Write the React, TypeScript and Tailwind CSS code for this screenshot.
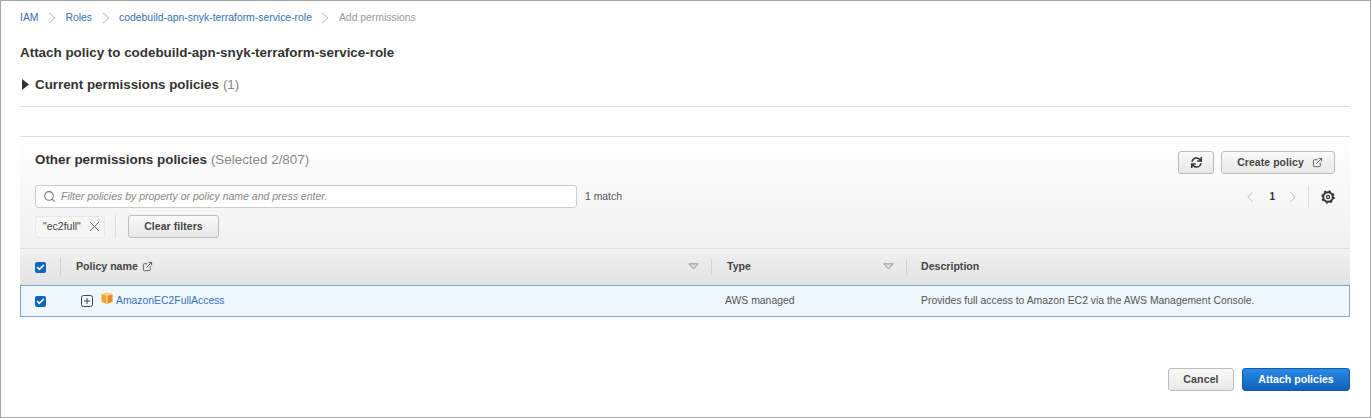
import { Check, ExternalLink, Search, X, ChevronLeft, ChevronRight } from 'lucide-react';
import { FaSync } from 'react-icons/fa';

const font = "font-['Liberation_Sans',Arial,sans-serif]";

const Chevron = () => (
    <svg width="8" height="12" viewBox="0 0 8 12" className="mx-[9.5px] shrink-0" fill="none" stroke="#b5b5b5" strokeWidth="1">
        <path d="M1 1l6 5-6 5" />
    </svg>
);

const Sort = () => (
    <svg width="11" height="7" viewBox="0 0 11 7" className="shrink-0">
        <path d="M0.8 0.8h9.4L5.5 6z" fill="#d8d8d8" stroke="#999" strokeWidth="1" />
    </svg>
);

const Box = () => (
    <span className="flex h-[11px] w-[11px] items-center justify-center rounded-[2px] bg-[#1166bb]">
        <Check size={9} strokeWidth={4} color="#fff" />
    </span>
);

const btn =
    'flex items-center justify-center rounded-[3px] border border-[#bdbdbd] bg-gradient-to-b from-[#fafafa] to-[#e8e8e8] text-[#444] font-bold';

export default function App() {
    return (
        <div className={`${font} h-[418px] w-[1371px] overflow-hidden border border-[#a3a3a3] bg-white px-[19px] text-[#333]`}>
            <nav className="flex h-[12px] mt-[11px] items-center text-[10.4px] text-[#3470b5]">
                <span>IAM</span>
                <Chevron />
                <span>Roles</span>
                <Chevron />
                <span>codebuild-apn-snyk-terraform-service-role</span>
                <Chevron />
                <span className="text-[#999]">Add permissions</span>
            </nav>

            <h1 className="mt-[21px] text-[13.4px] font-bold leading-[16px] text-[#333]">
                Attach policy to codebuild-apn-snyk-terraform-service-role
            </h1>

            <div className="mt-[15px] flex h-[17px] items-center text-[13.35px] font-bold">
                <svg width="7" height="11" viewBox="0 0 7 11" className="ml-[2px] mr-[6px]">
                    <path d="M0 0l7 5.5L0 11z" fill="#333" />
                </svg>
                <span>Current permissions policies</span>
                <span className="ml-[4px] font-normal text-[#888]">(1)</span>
            </div>

            <div className="mt-[13px] h-px w-[1330px] bg-[#ddd]" />

            <section className="mt-[29px] w-[1330px]">
                <div className="h-[112px] border-t border-[#ddd] bg-gradient-to-b from-white to-[#f1f1f1] pl-[15px] pr-[15px]">
                    <div className="flex items-start justify-between pt-[14px]">
                        <div className="text-[13.4px] leading-[17px] font-bold">
                            Other permissions policies
                            <span className="ml-[4px] font-normal text-[#888]">(Selected 2/807)</span>
                        </div>
                        <div className="flex gap-[7px]">
                            <button className={`${btn} h-[23px] w-[36px]`}>
                                <FaSync size={11} color="#333" />
                            </button>
                            <button className={`${btn} h-[23px] w-[114px] gap-[8px] pl-[4px] text-[10.4px] tracking-[0.1px]`}>
                                Create policy
                                <ExternalLink size={11} color="#555" />
                            </button>
                        </div>
                    </div>

                    <div className="mt-[11px] flex items-center">
                        <div className="flex h-[23px] w-[542px] items-center rounded-[3px] border border-[#ccc] bg-white pl-[7px]">
                            <Search size={13} color="#777" />
                            <span className="ml-[5px] text-[10.5px] italic text-[#888]">
                                Filter policies by property or policy name and press enter.
                            </span>
                        </div>
                        <span className="ml-[8px] text-[10.4px] text-[#555]">1 match</span>
                        <div className="ml-auto flex h-[23px] items-center">
                            <ChevronLeft size={18} strokeWidth={1} color="#aaa" />
                            <span className="ml-[10px] mr-[9px] text-[10px] font-bold">1</span>
                            <ChevronRight size={18} strokeWidth={1} color="#aaa" />
                            <div className="ml-[6px] mr-[12px] h-[23px] w-px bg-[#ddd]" />
                            <svg width="14" height="14" viewBox="0 0 14 14" fill="none" stroke="#333">
                                <circle cx="7" cy="7" r="4.8" strokeWidth="2" />
                                <circle cx="7" cy="7" r="6" strokeWidth="1.4" strokeDasharray="2.2 2.5" />
                                <circle cx="7" cy="7" r="1.6" strokeWidth="1.2" />
                            </svg>
                        </div>
                    </div>

                    <div className="mt-[7px] flex items-center">
                        <div className="flex h-[22px] w-[70px] items-center gap-[5px] rounded-[3px] border border-[#e8e8e8] bg-[#f6f6f6] pl-[7px] text-[10.5px] text-[#444]">
                            "ec2full"
                            <X size={17} strokeWidth={1.1} color="#444" />
                        </div>
                        <div className="ml-[10px] mr-[12px] h-[23px] w-px bg-[#ddd]" />
                        <button className={`${btn} h-[23px] w-[91px] text-[10.4px] tracking-[0.1px]`}>Clear filters</button>
                    </div>
                </div>

                <div className="flex h-[37px] items-center border-y border-[#ddd] bg-gradient-to-b from-[#f1f1f1] to-[#e3e3e3] pt-[1px] text-[10.6px] font-bold text-[#444]">
                    <div className="flex w-[41px] items-center pl-[15px]">
                        <Box />
                        <div className="ml-[14px] h-[18px] w-px bg-[#d2d2d2]" />
                    </div>
                    <div className="flex w-[650px] items-center justify-between pl-[15px] pr-[12px]">
                        <span className="flex items-center gap-[4px]">
                            Policy name
                            <ExternalLink size={11} color="#555" />
                        </span>
                        <Sort />
                    </div>
                    <div className="flex w-[195px] items-center justify-between border-l border-[#d2d2d2] pl-[15px] pr-[12px]">
                        <span>Type</span>
                        <Sort />
                    </div>
                    <div className="border-l border-[#d2d2d2] pl-[14px]">Description</div>
                </div>

                <div className="flex h-[32px] items-center border border-[#7ea6d6] bg-[#f0f8ff] text-[10.4px]">
                    <div className="w-[60px] pl-[14px]">
                        <Box />
                    </div>
                    <svg width="12" height="12" viewBox="0 0 12 12" fill="none" stroke="#444" strokeWidth="1">
                        <rect x="0.5" y="0.5" width="11" height="11" rx="2" />
                        <path d="M3 6h6M6 3v6" />
                    </svg>
                    <svg width="12" height="13" viewBox="0 0 13 14" className="ml-[8px] mb-[5px]">
                        <path d="M6.5 0.5L12.5 2.6v8L6.9 13V4.5z" fill="#e8901a" />
                        <path d="M6.1 0.5L0.5 2.6v8L6.1 13V4.5z" fill="#f5a52b" />
                        <path d="M1 2.6L6.5 0.6 12 2.6 6.5 4.4z" fill="#fdd28a" />
                    </svg>
                    <span className="ml-[3px] w-[609px] text-[#3470b5]">AmazonEC2FullAccess</span>
                    <span className="w-[196px] text-[#555]">AWS managed</span>
                    <span className="text-[#555]">Provides full access to Amazon EC2 via the AWS Management Console.</span>
                </div>
            </section>

            <div className="mt-[51px] flex w-[1330px] justify-end gap-[8px]">
                <button className={`${btn} h-[23px] w-[66px] text-[10.6px] tracking-[0.1px]`}>Cancel</button>
                <button className="flex h-[23px] w-[108px] items-center justify-center rounded-[3px] border border-[#0d5ca8] bg-gradient-to-b from-[#2a8ae6] to-[#0f62b8] text-[10.6px] font-bold text-white">
                    Attach policies
                </button>
            </div>
        </div>
    );
}
